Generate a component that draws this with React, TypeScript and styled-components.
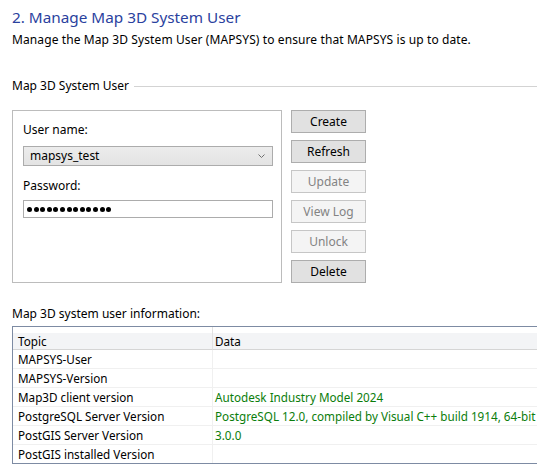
import { createGlobalStyle } from "styled-components";
import styled from "styled-components";

//#region --- Page styles ---
const GlobalStyle = createGlobalStyle`
  html, body {
    margin: 0;
    padding: 0;
    background: #ffffff;
    overflow: hidden;
  }
  body {
    font-family: "Noto Sans", "Open Sans", sans-serif;
    font-size: 12px;
    color: #000000;
  }
`;

const Page = styled.section`
  width: 537px;
  height: 472px;
  padding-left: 12px;
  box-sizing: border-box;
  overflow: hidden;
`;

const Title = styled.h1`
  margin: 7px 0 0;
  font-size: 15.3px;
  line-height: 20px;
  font-weight: 400;
  color: #2a419e;
`;

const Subtitle = styled.p`
  margin: 5px 0 0;
  line-height: 16px;
  letter-spacing: 0.1px;
`;

const GroupHeader = styled.div`
  display: flex;
  align-items: center;
  gap: 5px;
  margin-top: 30px;
  line-height: 16px;
  span {
    white-space: nowrap;
  }
  i {
    flex: 1;
    height: 1px;
    background: #d3d3d3;
  }
`;

const GroupBody = styled.div`
  display: flex;
  gap: 9px;
  margin-top: 16px;
`;

const Panel = styled.div`
  width: 270px;
  height: 173px;
  box-sizing: border-box;
  border: 1px solid #bcbcbc;
  padding: 11px 10px;
  display: flex;
  flex-direction: column;
`;

const FieldLabel = styled.label<{ $top: number }>`
  line-height: 16px;
  margin-top: ${(p) => p.$top}px;
`;

const Combo = styled.div`
  margin-top: 8px;
  width: 250px;
  height: 20px;
  box-sizing: border-box;
  border: 1px solid #acacac;
  background: linear-gradient(#ececec, #e3e3e3);
  display: flex;
  align-items: center;
  justify-content: space-between;
  padding: 0 7px 0 6px;
  line-height: 16px;
`;

const PasswordBox = styled.div`
  margin-top: 6px;
  width: 250px;
  height: 18px;
  box-sizing: border-box;
  border: 1px solid #acacac;
  background: #fff;
  display: flex;
  align-items: center;
  gap: 1.6px;
  padding-left: 3px;
`;

const Dot = styled.span`
  width: 5px;
  height: 5px;
  border-radius: 50%;
  background: #000;
`;

const ButtonColumn = styled.div`
  display: flex;
  flex-direction: column;
  gap: 7px;
`;

const Button = styled.button<{ $disabled?: boolean }>`
  width: 75px;
  height: 23px;
  box-sizing: border-box;
  margin: 0;
  padding: 0;
  font: inherit;
  line-height: 16px;
  border: 1px solid ${(p) => (p.$disabled ? "#c6c6c6" : "#adadad")};
  background: ${(p) => (p.$disabled ? "#f4f4f4" : "#e1e1e1")};
  color: ${(p) => (p.$disabled ? "#838383" : "#000")};
`;

const InfoLabel = styled.div`
  margin-top: 23px;
  line-height: 16px;
`;

const Table = styled.div`
  margin-top: 4px;
  width: 560px;
  border: 1px solid #7d8ba3;
  display: grid;
  grid-template-columns: 200px 1fr;
  font-size: 11.7px;
`;

const HeaderCell = styled.div<{ $first?: boolean }>`
  height: 23px;
  box-sizing: border-box;
  padding: 6px 0 0 ${(p) => (p.$first ? 5 : 2)}px;
  line-height: 17px;
  background: linear-gradient(#ffffff 0 6px, #f3f4f6 6px);
  border-bottom: 1px solid #d5d5d5;
  border-right: ${(p) => (p.$first ? "1px solid #e2e2e2" : "none")};
`;

const Cell = styled.div<{ $first?: boolean }>`
  height: 19px;
  box-sizing: border-box;
  padding-left: ${(p) => (p.$first ? 5 : 2)}px;
  line-height: 18px;
  white-space: nowrap;
  color: ${(p) => (p.$first ? "#000" : "#0b7d0b")};
  border-bottom: 1px solid #f0f0f0;
  border-right: ${(p) => (p.$first ? "1px solid #f0f0f0" : "none")};
  &:nth-last-child(-n + 2) {
    border-bottom: none;
    height: 18px;
  }
`;
//#endregion

const buttons = [
  { label: "Create", disabled: false },
  { label: "Refresh", disabled: false },
  { label: "Update", disabled: true },
  { label: "View Log", disabled: true },
  { label: "Unlock", disabled: true },
  { label: "Delete", disabled: false },
];

const info = [
  ["MAPSYS-User", ""],
  ["MAPSYS-Version", ""],
  ["Map3D client version", "Autodesk Industry Model 2024"],
  [
    "PostgreSQL Server Version",
    "PostgreSQL 12.0, compiled by Visual C++ build 1914, 64-bit",
  ],
  ["PostGIS Server Version", "3.0.0"],
  ["PostGIS installed Version", ""],
];

const App = () => {
  return (
    <Page>
      <GlobalStyle />
      <Title>2. Manage Map 3D System User</Title>
      <Subtitle>
        Manage the Map 3D System User (MAPSYS) to ensure that MAPSYS is up to
        date.
      </Subtitle>

      <GroupHeader>
        <span>Map 3D System User</span>
        <i />
      </GroupHeader>

      <GroupBody>
        <Panel>
          <FieldLabel $top={0}>User name:</FieldLabel>
          <Combo>
            <span>mapsys_test</span>
            <svg width="7" height="4" viewBox="0 0 7 4">
              <path d="M0.5 0.5 L3.5 3.5 L6.5 0.5" fill="none" stroke="#707070" />
            </svg>
          </Combo>
          <FieldLabel $top={12}>Password:</FieldLabel>
          <PasswordBox>
            {Array.from({ length: 13 }).map((_, i) => (
              <Dot key={i} />
            ))}
          </PasswordBox>
        </Panel>
        <ButtonColumn>
          {buttons.map((b) => (
            <Button key={b.label} $disabled={b.disabled}>
              {b.label}
            </Button>
          ))}
        </ButtonColumn>
      </GroupBody>

      <InfoLabel>Map 3D system user information:</InfoLabel>
      <Table>
        <HeaderCell $first>Topic</HeaderCell>
        <HeaderCell>Data</HeaderCell>
        {info.map(([topic, data]) => [
          <Cell key={topic + "-t"} $first>
            {topic}
          </Cell>,
          <Cell key={topic + "-d"}>{data}</Cell>,
        ])}
      </Table>
    </Page>
  );
};

export default App;
